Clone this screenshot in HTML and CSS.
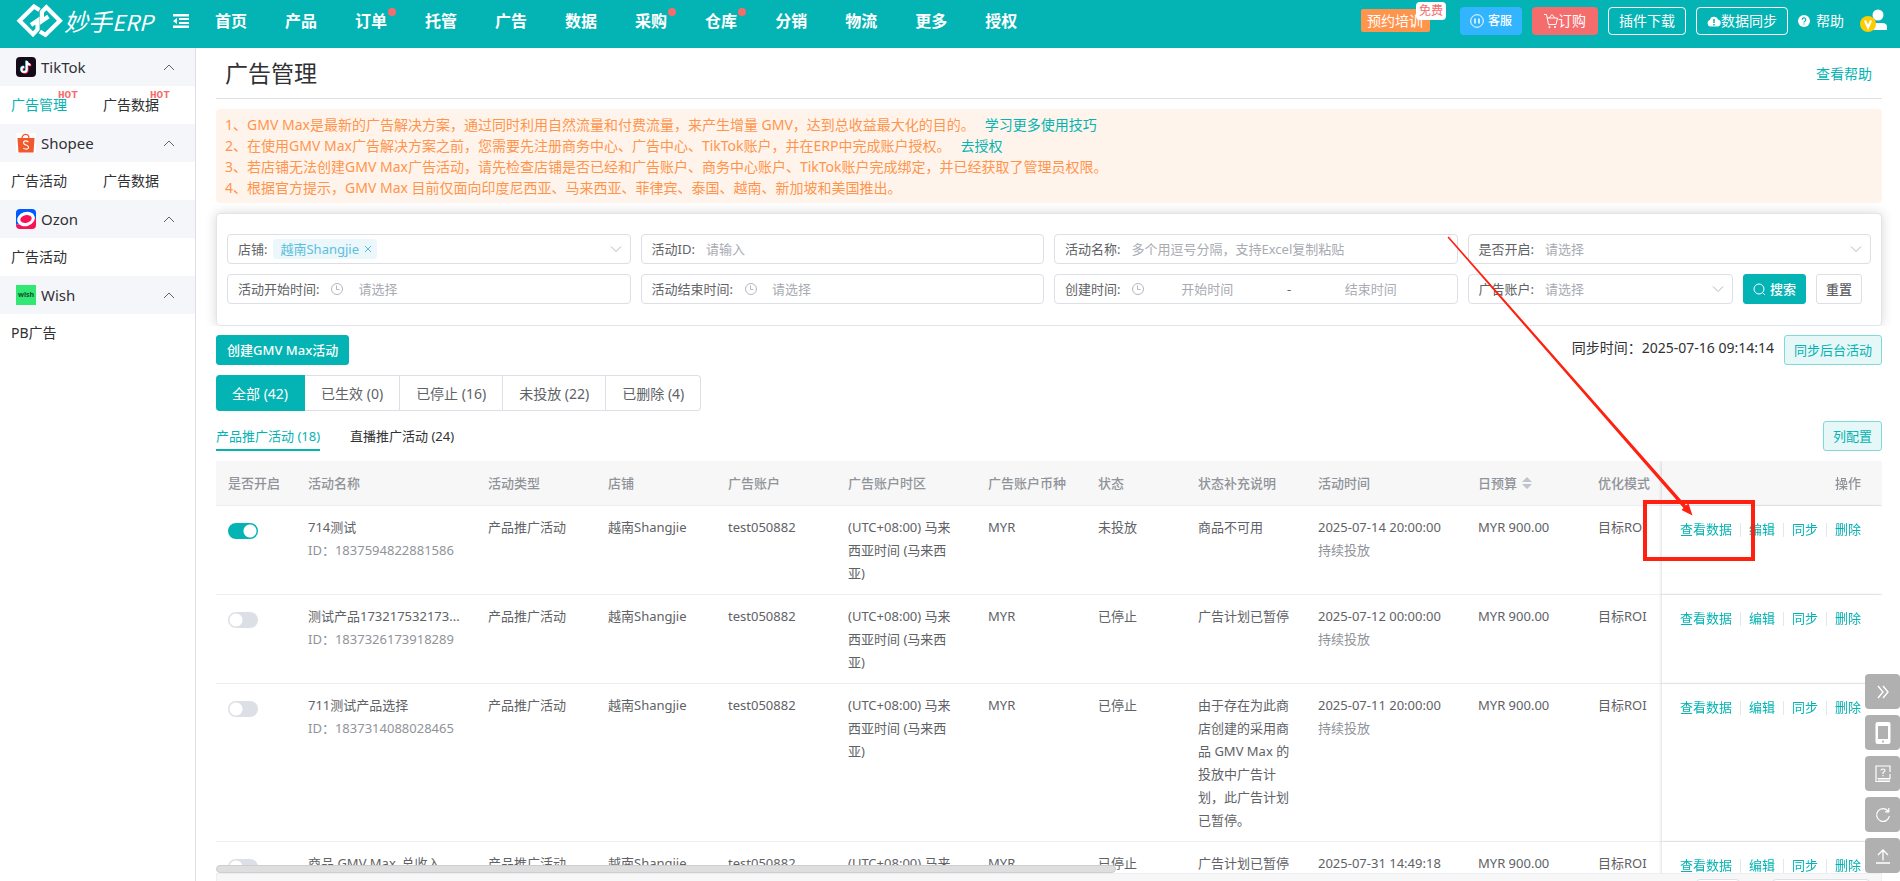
FILE: index.html
```html
<!DOCTYPE html>
<html lang="zh-CN">
<head>
<meta charset="utf-8">
<title>广告管理</title>
<link rel="stylesheet" href="styles.css">
</head>
<body>
<svg class="defs" aria-hidden="true">
  <symbol id="i-up" viewBox="0 0 12 12"><path d="M1 9l5-5 5 5" fill="none" stroke="currentColor"/></symbol>
  <symbol id="i-down" viewBox="0 0 12 12"><path d="M1 3.5l5 5 5-5" fill="none" stroke="currentColor"/></symbol>
  <symbol id="i-clock" viewBox="0 0 14 14"><circle cx="7" cy="7" r="5.5" fill="none" stroke="currentColor"/><path d="M6.5 3.5v4h3" fill="none" stroke="currentColor"/></symbol>
</svg>
<header class="topbar">
  <a class="logo" href="#">
    <svg width="48" height="36" viewBox="0 0 48 36" fill="none" stroke="#fff" stroke-width="4.200"><path id="g" d="M23.500 6L18 2.500 3.500 16.700 17 30.200 21.500 25.500V16.500L15 21"/><use href="#g" transform="rotate(180 23.700 16.700)"/></svg>
    <span class="logo-cn">妙手</span><span class="logo-en">ERP</span>
  </a>
  <button class="fold" aria-label="收起菜单"><svg width="16" height="14" viewBox="0 0 16 14" fill="#fff"><path d="M0 0h16v2.500H0zM6 4h10v2H6zM6 8h10v2H6zM0 11.500h16V14H0zM0 7l4-3v6z"/></svg></button>
  <nav class="nav">
    <a href="#">首页</a><a href="#">产品</a><a class="dot" href="#">订单</a><a href="#">托管</a><a href="#">广告</a><a href="#">数据</a><a class="dot" href="#">采购</a><a class="dot" href="#">仓库</a><a href="#">分销</a><a href="#">物流</a><a href="#">更多</a><a href="#">授权</a>
  </nav>
  <div class="tools">
    <button class="train">预约培训<span class="free">免费</span></button>
    <button class="tbtn blue"><svg width="14" height="16" viewBox="0 0 14 16" fill="none" stroke="#fff"><circle cx="7" cy="8" r="6.300"/><path d="M5 5.500v5M9 5.500v5" stroke-width="1.500"/></svg>客服</button>
    <button class="tbtn red"><svg width="14" height="16" viewBox="0 0 14 16" fill="none" stroke="#fff"><path d="M0 1.500h2.500l2 10H12L13.500 5H3M5 5l3-3.500L11 5"/><circle cx="5.500" cy="14" r=".7"/><circle cx="11" cy="14" r=".7"/></svg>订购</button>
    <button class="tbtn line">插件下载</button>
    <button class="tbtn line"><svg width="14" height="12" viewBox="0 0 14 12"><path d="M3.500 11.500a3.400 3.400 0 0 1-.6-6.600A4.200 4.200 0 0 1 11 4.600a3.500 3.500 0 0 1-.5 6.900z" fill="#fff"/><path d="M7 4v4M7 9v1.500" stroke="#04b3b3" stroke-width="1.500"/></svg>数据同步</button>
    <a class="help" href="#"><svg width="12" height="12" viewBox="0 0 12 12"><circle cx="6" cy="6" r="6" fill="#fff"/><path d="M4.200 4.800a1.800 1.800 0 1 1 2.600 1.500Q6 6.600 6 7.400M6 8.400v1.200" fill="none" stroke="#04b3b3" stroke-width="1.200"/></svg>帮助</a>
    <button class="avatar" aria-label="账户"><svg width="28" height="24" viewBox="0 0 28 24"><circle cx="18" cy="6" r="5.500" fill="#fff"/><path d="M9 21v-3q1-4 5-4h8q5 0 5 4v3z" fill="#fff"/><circle cx="8" cy="15" r="8" fill="#fc0"/><path d="M5 11.500l3 7 3-7" fill="none" stroke="#fff" stroke-width="2.200"/></svg></button>
  </div>
</header>
<div class="page">
  <aside class="side">
    <h2><svg width="20" height="20" viewBox="0 0 20 20"><rect width="20" height="20" rx="4" fill="#150a18"/><path d="M10.800 4v8.500a2.600 2.600 0 1 1-2.600-2.600M10.800 4.500q.6 3 3.700 3.300" transform="translate(-.6 -.4)" fill="none" stroke="#25f4ee" stroke-width="2"/><path d="M10.800 4v8.500a2.600 2.600 0 1 1-2.600-2.600M10.800 4.500q.6 3 3.700 3.300" transform="translate(.7 .6)" fill="none" stroke="#fe2c55" stroke-width="2"/><path d="M10.800 4v8.500a2.600 2.600 0 1 1-2.600-2.600M10.800 4.500q.6 3 3.700 3.300" fill="none" stroke="#fff" stroke-width="1.900"/></svg><span>TikTok</span><svg class="arrow" width="12" height="12"><use href="#i-up"/></svg></h2>
    <div class="links"><a class="on hot" href="#">广告管理</a><a class="hot" href="#">广告数据</a></div>
    <h2><svg width="20" height="20" viewBox="0 0 20 20"><rect width="20" height="20" fill="#fff"/><path d="M1.500 5h17l-1 14.500h-15z" fill="#f1582c"/><path d="M6 5.500C6 0 13 0 13 5.500" fill="none" stroke="#f1582c" stroke-width="1.300"/><path d="M12.500 9Q9.500 7 7.800 8.700 6.800 11 10 12q3.500 1.200 2.200 3.400-1.800 1.600-5-.3" fill="none" stroke="#fff" stroke-width="1.100"/></svg><span>Shopee</span><svg class="arrow" width="12" height="12"><use href="#i-up"/></svg></h2>
    <div class="links"><a href="#">广告活动</a><a href="#">广告数据</a></div>
    <h2><svg width="20" height="20" viewBox="0 0 20 20"><path d="M4 0h12q4 0 4 4v6L0 16V4q0-4 4-4z" fill="#005bff"/><path d="M0 16l4-1 16-6v7q0 4-4 4H4q-4 0-4-4z" fill="#f91155"/><ellipse cx="10" cy="10" rx="9" ry="7" fill="#fff" transform="rotate(-18 10 10)"/><ellipse cx="10" cy="10" rx="5.800" ry="3.800" fill="#f91155" transform="rotate(-12 10 10)"/></svg><span>Ozon</span><svg class="arrow" width="12" height="12"><use href="#i-up"/></svg></h2>
    <div class="links"><a href="#">广告活动</a></div>
    <h2><i class="wish">wish</i><span>Wish</span><svg class="arrow" width="12" height="12"><use href="#i-up"/></svg></h2>
    <div class="links"><a href="#">PB广告</a></div>
  </aside>
  <main class="main">
    <div class="title"><h1>广告管理</h1><a href="#">查看帮助</a></div>
    <div class="notice">
      <p>1、GMV Max是最新的广告解决方案，通过同时利用自然流量和付费流量，来产生增量 GMV，达到总收益最大化的目的。<a href="#">学习更多使用技巧</a></p>
      <p>2、在使用GMV Max广告解决方案之前，您需要先注册商务中心、广告中心、TikTok账户，并在ERP中完成账户授权。<a href="#">去授权</a></p>
      <p>3、若店铺无法创建GMV Max广告活动，请先检查店铺是否已经和广告账户、商务中心账户、TikTok账户完成绑定，并已经获取了管理员权限。</p>
      <p>4、根据官方提示，GMV Max 目前仅面向印度尼西亚、马来西亚、菲律宾、泰国、越南、新加坡和美国推出。</p>
    </div>
    <div class="filter-wrap">
    <form class="filter">
      <div class="field"><label for="shop">店铺:</label><span class="tag">越南Shangjie<svg width="8" height="8" viewBox="0 0 8 8"><path d="M1 1l6 6M7 1L1 7" stroke="currentColor"/></svg></span><input id="shop"><svg class="chev" width="12" height="12"><use href="#i-down"/></svg></div>
      <div class="field"><label for="aid">活动ID:</label><input id="aid" placeholder="请输入"></div>
      <div class="field"><label for="aname">活动名称:</label><input id="aname" placeholder="多个用逗号分隔，支持Excel复制粘贴"></div>
      <div class="field"><label for="open">是否开启:</label><select id="open"><option>请选择</option></select><svg class="chev" width="12" height="12"><use href="#i-down"/></svg></div>
      <div class="field date"><label for="st">活动开始时间:</label><svg width="14" height="14"><use href="#i-clock"/></svg><input id="st" placeholder="请选择"></div>
      <div class="field date"><label for="et">活动结束时间:</label><svg width="14" height="14"><use href="#i-clock"/></svg><input id="et" placeholder="请选择"></div>
      <div class="field range"><label for="ct">创建时间:</label><svg width="14" height="14"><use href="#i-clock"/></svg><input id="ct" placeholder="开始时间"><span>-</span><input aria-label="结束时间" placeholder="结束时间"></div>
      <div class="last">
        <div class="field"><label for="acc">广告账户:</label><select id="acc"><option>请选择</option></select><svg class="chev" width="12" height="12"><use href="#i-down"/></svg></div>
        <button type="button" class="btn primary"><svg width="13" height="13" viewBox="0 0 13 13" fill="none" stroke="#fff"><circle cx="6" cy="6" r="5"/><path d="M9.500 9.500l2.500 2.500"/></svg>搜索</button>
        <button type="button" class="btn plain">重置</button>
      </div>
    </form>
    </div>
    <div class="bar">
      <button class="btn primary create">创建GMV Max活动</button>
      <span class="sync">同步时间：2025-07-16 09:14:14</span>
      <button class="btn soft">同步后台活动</button>
    </div>
    <div class="segs"><button class="on">全部 (42)</button><button>已生效 (0)</button><button>已停止 (16)</button><button>未投放 (22)</button><button>已删除 (4)</button></div>
    <div class="tabs"><button class="tab on">产品推广活动 (18)</button><button class="tab">直播推广活动 (24)</button><button class="btn soft">列配置</button></div>
    <div class="table-box">
      <table>
        <colgroup><col class="w80"><col class="w180"><col class="w120"><col class="w120"><col class="w120"><col class="w140"><col class="w110"><col class="w100"><col class="w120"><col class="w160"><col class="w120"><col class="w120"><col class="w220"></colgroup>
        <thead><tr><th>是否开启</th><th>活动名称</th><th>活动类型</th><th>店铺</th><th>广告账户</th><th>广告账户时区</th><th>广告账户币种</th><th>状态</th><th>状态补充说明</th><th>活动时间</th><th>日预算<svg class="sort" width="10" height="12" viewBox="0 0 10 12"><path d="M5 0l5 5H0zM5 12l5-5H0z" fill="#c0c4cc"/></svg></th><th>优化模式</th><th class="ops">操作</th></tr></thead>
        <tbody>
        <tr><td><input class="switch" type="checkbox" role="switch" aria-label="714测试" checked></td><td><div class="name">714测试</div><div class="sub">ID：1837594822881586</div></td><td>产品推广活动</td><td>越南Shangjie</td><td>test050882</td><td class="zone">(UTC+08:00) 马来西亚时间 (马来西亚)</td><td>MYR</td><td>未投放</td><td>商品不可用</td><td>2025-07-14 20:00:00<div class="sub">持续投放</div></td><td>MYR 900.00</td><td>目标ROI</td><td class="ops"><div class="acts"><a href="#">查看数据</a><a href="#">编辑</a><a href="#">同步</a><a href="#">删除</a></div></td></tr>
        <tr><td><input class="switch" type="checkbox" role="switch" aria-label="测试产品"></td><td><div class="name">测试产品173217532173...</div><div class="sub">ID：1837326173918289</div></td><td>产品推广活动</td><td>越南Shangjie</td><td>test050882</td><td class="zone">(UTC+08:00) 马来西亚时间 (马来西亚)</td><td>MYR</td><td>已停止</td><td>广告计划已暂停</td><td>2025-07-12 00:00:00<div class="sub">持续投放</div></td><td>MYR 900.00</td><td>目标ROI</td><td class="ops"><div class="acts"><a href="#">查看数据</a><a href="#">编辑</a><a href="#">同步</a><a href="#">删除</a></div></td></tr>
        <tr><td><input class="switch" type="checkbox" role="switch" aria-label="711测试产品选择"></td><td><div class="name">711测试产品选择</div><div class="sub">ID：1837314088028465</div></td><td>产品推广活动</td><td>越南Shangjie</td><td>test050882</td><td class="zone">(UTC+08:00) 马来西亚时间 (马来西亚)</td><td>MYR</td><td>已停止</td><td>由于存在为此商店创建的采用商品 GMV Max 的投放中广告计划，此广告计划已暂停。</td><td>2025-07-11 20:00:00<div class="sub">持续投放</div></td><td>MYR 900.00</td><td>目标ROI</td><td class="ops"><div class="acts"><a href="#">查看数据</a><a href="#">编辑</a><a href="#">同步</a><a href="#">删除</a></div></td></tr>
        <tr><td><input class="switch" type="checkbox" role="switch" aria-label="商品 GMV Max"></td><td><div class="name">商品 GMV Max_总收入</div></td><td>产品推广活动</td><td>越南Shangjie</td><td>test050882</td><td class="zone">(UTC+08:00) 马来西亚时间 (马来西亚)</td><td>MYR</td><td>已停止</td><td>广告计划已暂停</td><td>2025-07-31 14:49:18</td><td>MYR 900.00</td><td>目标ROI</td><td class="ops"><div class="acts"><a href="#">查看数据</a><a href="#">编辑</a><a href="#">同步</a><a href="#">删除</a></div></td></tr>
        </tbody>
      </table>
      <div class="thumb"></div>
    </div>
    <div class="pager"><button class="pg" aria-label="页码"></button><button class="pg wide" aria-label="每页条数"></button></div>
  </main>
</div>
<div class="float">
  <button aria-label="展开"><svg width="14" height="14" viewBox="0 0 14 14" fill="none" stroke="#fff" stroke-width="1.400"><path d="M2 1l5 6-5 6M7 1l5 6-5 6"/></svg></button>
  <button aria-label="手机端"><svg width="16" height="22" viewBox="0 0 16 22"><path fill="#fff" fill-rule="evenodd" d="M2.500 0h11Q15.500 0 15.500 2v18q0 2-2 2h-11q-2 0-2-2V2q0-2 2-2zM3 4v13h10V4zM8 18.500a1 1 0 1 0 .01 0z"/></svg></button>
  <button aria-label="帮助文档"><svg width="16" height="18" viewBox="0 0 16 18" fill="none" stroke="#fff" stroke-width="1.200"><path d="M15 7V1H1v15.500h14M15 9v4.500H2.500M3 15h12M6 5.500q0-1.500 2-1.500t2 1.500Q10 6.500 8 7.500V9M8 10v1.300"/></svg></button>
  <button aria-label="刷新"><svg width="16" height="16" viewBox="0 0 16 16" fill="none" stroke="#fff" stroke-width="1.200"><path d="M13.300 4.300A6.400 6.400 0 1 0 14.400 9M13.800 1v3.800H10"/></svg></button>
  <button aria-label="回到顶部"><svg width="14" height="16" viewBox="0 0 14 16" fill="none" stroke="#fff" stroke-width="1.300"><path d="M7 12.500V2M2 7l5-5 5 5M0 15h14"/></svg></button>
</div>
<svg class="mark" width="320" height="330" viewBox="0 0 320 330" aria-hidden="true"><path d="M7.500 2.500L8.700 1.500 246 270.500 248.500 268.500 252.500 280.500 241.500 275 243.500 273z" fill="#ff2010"/><rect x="205" y="267" width="108" height="57" fill="none" stroke="#ff2010" stroke-width="4"/></svg>
</body>
</html>
```
FILE: styles.css
```css
*{box-sizing:border-box}
html{font-family:"Noto Sans","Noto Sans CJK SC",sans-serif;font-size:14px;color:#303133}
body{margin:0;height:100vh;overflow:hidden;display:flex;flex-direction:column;background:#fff;position:relative}
h1,h2,p{margin:0;font-weight:400}
a{color:#04b3b3;text-decoration:none}
button,input,select{font:inherit;color:inherit;margin:0}
button{cursor:pointer;white-space:nowrap}
svg{flex:none}
.defs{position:absolute;width:0;height:0}

.topbar{flex:none;height:48px;background:#04b3b3;display:flex;padding-right:12px;color:#fff}
.logo{display:flex;width:157px;padding:4px 0 0 16px;color:#fff;font-style:italic;white-space:nowrap}
.logo-cn{font-family:"Noto Sans CJK SC",sans-serif;font-size:24px;line-height:34px}
.logo-en{font-family:"Noto Sans CJK SC",sans-serif;font-size:22px;line-height:34px}
.fold{width:48px;height:42px;padding:0;border:0;background:none;display:flex;align-items:center;justify-content:center}
.nav{display:flex;gap:38px;margin-left:10px;font-size:16px;font-weight:700;line-height:42px}
.nav a{color:#fff;position:relative;white-space:nowrap}
.dot::after{content:"";position:absolute;right:-9px;top:8px;width:8px;height:8px;border-radius:50%;background:#f56c6c}
.tools{margin-left:auto;display:flex;gap:10px;align-items:flex-start;line-height:20px}
.tools button{color:#fff}
.train{position:relative;margin:9px 20px 0 0;height:23px;padding:0 7px 0 6px;border:0;border-radius:2px;background:#ff944d}
.free{position:absolute;left:55px;top:-7px;height:18px;padding:0 3px;border-radius:4px;background:#fff;color:#f56c6c;font-size:12px;line-height:18px}
.tbtn{margin-top:7px;height:28px;padding:0 10px;border:1px solid #fff;border-radius:4px;background:none;display:flex;align-items:center}
.tbtn.blue{border:0;background:#33b4ff;gap:4px;font-size:12px;font-weight:500}
.tbtn.red{border:0;background:#f56c6c;padding:0 12px}
.help{display:flex;align-items:center;gap:6px;height:42px;color:#fff}
.avatar{margin:9px 0 0 6px;padding:0;border:0;background:none;height:24px}

.page{flex:1;min-height:0;display:flex}
.side{flex:none;width:196px;border-right:1px solid #dcdfe6}
.side h2{height:38px;padding:0 20px 0 16px;display:flex;align-items:center;gap:5px;background:#f5f6fa;font-size:15px}
.arrow{margin-left:auto;color:#606266}
.wish{width:20px;height:20px;background:#32e875;color:#114b2b;font:700 7px/20px "Open Sans",sans-serif;text-align:center}
.links{height:38px;padding-left:11px;display:flex;gap:36px;line-height:37px}
.links a{position:relative;color:#303133}
.links .on{color:#04b3b3}
.hot::after{content:"HOT";position:absolute;left:47px;top:4px;font:700 11px/10px "Liberation Mono",monospace;color:#f56c6c}

.main{flex:1;min-width:0;padding:0 18px 0 20px;display:flex;flex-direction:column}
.main>*{flex:none}
.title{height:51px;padding:0 10px 0 9px;border-bottom:1px solid #dcdfe6;display:flex;justify-content:space-between;align-items:center}
.title h1{font-size:23px;line-height:50px}
.notice{margin-top:10px;padding:5px 9px;background:#fff4eb;border-radius:4px;color:#ff944d;line-height:21px}
.notice a{margin-left:10px}
.filter-wrap{margin:0 -18px 0 -20px;padding:10px 18px 0 20px;overflow:hidden}
.filter{padding:20px 10px;height:113px;border:1px solid #e1e4ea;border-radius:4px;box-shadow:0 0 12px rgba(0,0,0,.16);display:grid;grid-template-columns:repeat(4,minmax(0,1fr));grid-auto-rows:30px;gap:10px;background:#fff;font-size:13px}
.field{height:30px;border:1px solid #dcdfe6;border-radius:4px;padding:0 8px 0 10px;display:flex;align-items:center;color:#606266;min-width:0;flex:1;line-height:18px}
.field label{margin-right:11px;white-space:nowrap}
.field input,.field select{flex:1;min-width:0;width:0;border:0;padding:0;outline:0;background:none;appearance:none;color:#a8abb2}
.field input::placeholder{color:#a8abb2}
.field svg{color:#b4b7be}
.date input{margin-left:14px}
.range{padding-right:24px}
.range input{text-align:center}
.range span{width:40px;text-align:center}
.tag{display:flex;align-items:center;gap:5px;height:20px;margin-left:-5px;padding:0 5px 0 7px;border-radius:4px;background:#ebf7fa;color:#5bc0de}
.field .tag svg{color:#5bc0de}
.last{display:flex;gap:10px;padding-right:9px}
.btn{height:30px;padding:0 9px;border:1px solid #dcdfe6;border-radius:3px;background:#fff;font-size:13px;line-height:18px;display:flex;align-items:center;gap:4px}
.btn.primary{background:#04b3b3;border-color:#04b3b3;color:#fff;font-weight:500}
.btn.create{padding:0 10px}
.btn.plain{color:#606266;font-weight:500}
.btn.soft{background:#e6f7f7;border-color:#82d9d9;color:#04b3b3}
.bar{margin-top:9px;display:flex;gap:10px}
.sync{margin-left:auto;line-height:26px}
.segs{margin-top:10px;display:flex}
.segs button{height:36px;padding:0 16px;border:1px solid #dcdfe6;border-left-width:0;background:#fff;color:#606266}
.segs .on{background:#04b3b3;border-color:#04b3b3;color:#fff;border-radius:4px 0 0 4px}
.segs button:last-child{border-radius:0 4px 4px 0}
.tabs{margin-top:10px;display:flex;gap:30px}
.tab{height:30px;padding:0;border:0;border-bottom:2px solid transparent;background:none;font-size:13px;color:#303133}
.tab.on{color:#04b3b3;border-color:#04b3b3}
.tabs .btn{margin-left:auto}

.main>.table-box{flex:1;min-height:0;margin-top:10px;overflow:hidden;position:relative}
table{width:100%;min-width:1710px;table-layout:fixed;border-collapse:separate;border-spacing:0;font-size:13px;line-height:23px;color:#606266}
.w80{width:80px}.w100{width:100px}.w110{width:110px}.w120{width:120px}.w140{width:140px}.w160{width:160px}.w180{width:180px}.w220{width:220px}
th{height:45px;padding:0 12px;text-align:left;font-weight:500;color:#909399;background:#f7f7f7;border-bottom:1px solid #ebeef5;white-space:nowrap}
td{padding:10px 12px 9px;vertical-align:top;border-bottom:1px solid #ebeef5}
td:nth-child(10){white-space:nowrap}
.zone{padding-right:22px}
.sort{margin-left:5px;vertical-align:-1px}
.name{white-space:nowrap}
.sub{color:#909399}
.ops{position:sticky;right:0;background:#fff;text-align:right;padding-right:21px;box-shadow:-1px 0 3px rgba(0,0,0,.13)}
th.ops{background:#f7f7f7}
.acts{display:flex;justify-content:flex-end;padding-top:2px}
.acts a+a{margin-left:8px;padding-left:9px;background:linear-gradient(#e4e7ed,#e4e7ed) 0 5px/1px 14px no-repeat}
.switch{appearance:none;display:block;width:30px;height:16px;margin:7px 0 0;border-radius:8px;background:radial-gradient(circle at 8px 8px,#fff 6px,transparent 7px) #dcdfe6}
.switch:checked{background:radial-gradient(circle at 22px 8px,#fff 6px,transparent 7px) #04b3b3}
.thumb{position:absolute;left:0;bottom:0;width:54%;height:8px;border-radius:4px;background:#dedede;border:1px solid #cecece}
.pager{height:32px;margin-bottom:-24px;padding:5px 11px;background:#f7f7f7;border:1px solid #ebeef5;display:flex;justify-content:flex-end;gap:32px}
.pg{width:44px;height:28px;border:1px solid #dcdfe6;border-radius:4px;background:#fff}
.pg.wide{width:98px}

.float{position:absolute;right:0;bottom:8px;display:flex;flex-direction:column;gap:6px}
.float button{width:35px;height:35px;border:0;border-radius:4px;background:#b0b0b0;display:flex;align-items:center;justify-content:center;padding:0}
.mark{position:absolute;left:1440px;top:235px;pointer-events:none}
```
